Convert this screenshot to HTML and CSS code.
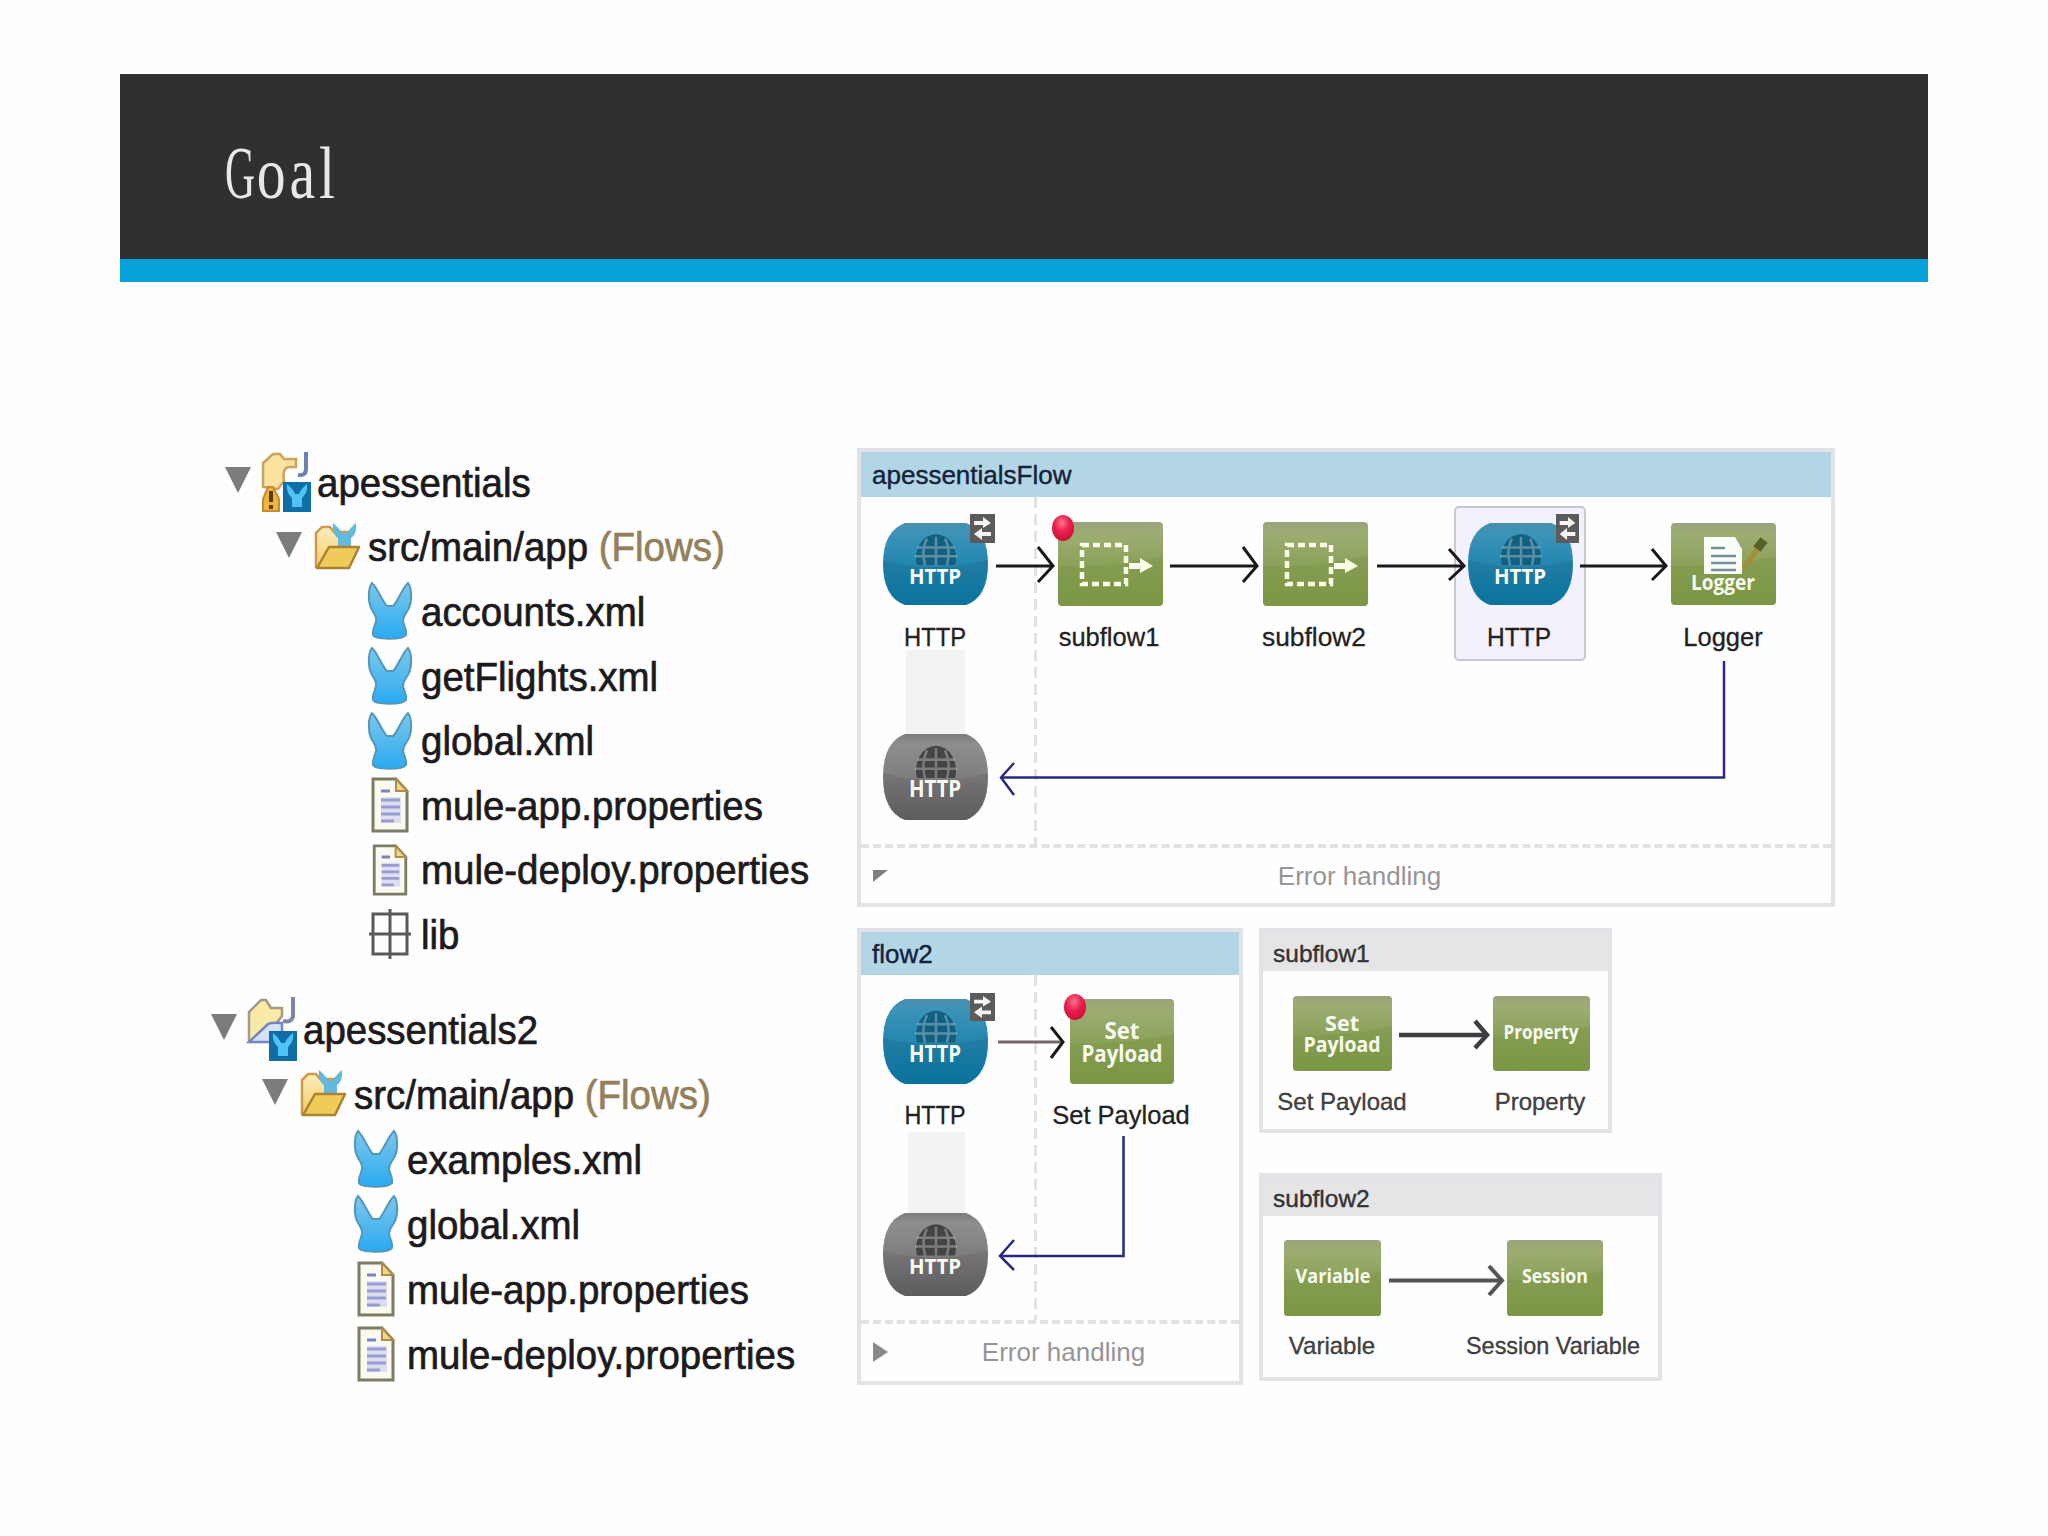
FILE: index.html
```
<!DOCTYPE html>
<html lang="en">
<head>
    <meta charset="UTF-8">
    <meta name="viewport" content="width=device-width, initial-scale=1.0">
    <title>Goal</title>
    <link rel="stylesheet" href="styles.css">
</head>
<body>
    <!-- shared shapes -->
    <svg class="defs" width="0" height="0">
        <defs>
            <linearGradient id="blue" x1="0" y1="0" x2="0" y2="1">
                <stop offset="0" stop-color="#4a8fae"/>
                <stop offset=".12" stop-color="#3c93b8"/>
                <stop offset=".5" stop-color="#2487b0"/>
                <stop offset="1" stop-color="#0a7dab"/>
            </linearGradient>
            <linearGradient id="grey" x1="0" y1="0" x2="0" y2="1">
                <stop offset="0" stop-color="#7c7a7c"/>
                <stop offset=".12" stop-color="#8f8d8f"/>
                <stop offset=".5" stop-color="#7f7d7f"/>
                <stop offset="1" stop-color="#666466"/>
            </linearGradient>
            <linearGradient id="green" x1="0" y1="0" x2="0" y2="1">
                <stop offset="0" stop-color="#9aa37c"/>
                <stop offset=".14" stop-color="#9dad72"/>
                <stop offset=".5" stop-color="#8ba25a"/>
                <stop offset="1" stop-color="#7f9a49"/>
            </linearGradient>
            <linearGradient id="sky" x1="0" y1="0" x2="0" y2="1">
                <stop offset="0" stop-color="#7cc8ea"/>
                <stop offset="1" stop-color="#2aaaf2"/>
            </linearGradient>
            <linearGradient id="gold" x1="0" y1="0" x2="0" y2="1">
                <stop offset="0" stop-color="#fbeec0"/>
                <stop offset="1" stop-color="#f3cd62"/>
            </linearGradient>
            <radialGradient id="red" cx=".45" cy=".3" r=".7">
                <stop offset="0" stop-color="#f87490"/>
                <stop offset=".5" stop-color="#ea1f4b"/>
                <stop offset="1" stop-color="#c8103a"/>
            </radialGradient>

            <symbol id="rabbit" viewBox="0 0 46 60">
                <path d="M5 2C1 7 1 20 4 27C6 32 10 34 9 40C8 45 5 49 6 54C8 59 36 59 39 54C40 49 37 45 36 40C36 34 40 32 42 27C45 20 45 7 41 2C36 6 30 22 26 25H20C16 22 10 6 5 2Z" fill="url(#sky)" stroke="#5597b8" stroke-width="2"/>
            </symbol>
            <symbol id="doc" viewBox="0 0 38 56">
                <path d="M2 2H25L36 14V54H2Z" fill="#fbfaf0" stroke="#7d7b62" stroke-width="3"/>
                <path d="M25 2V14H36Z" fill="#f3d48c" stroke="#b08c48" stroke-width="2"/>
                <path d="M10 14H19M10 23H29M10 30H29M10 37H29M10 44H23" stroke="#7d83bd" stroke-width="3"/>
                <path d="M10 20H30V46H10Z" fill="#b9bdf0" opacity=".45"/>
            </symbol>
            <symbol id="folder" viewBox="0 0 48 48">
                <path d="M3 44V10L9 4H17L21 9H35V44Z" fill="url(#gold)" stroke="#d09a48" stroke-width="2.5"/>
                <path d="M20 0C19 9 22 13 25 15V23H38V15C41 13 44 9 43 0C39 3 36 7 34 10H29C27 7 24 3 20 0Z" fill="#62b9dc"/>
                <path d="M4 45L16 24H46L36 45Z" fill="#f0cb5c" stroke="#ab8230" stroke-width="2.5" stroke-linejoin="round"/>
            </symbol>
            <symbol id="caret" viewBox="0 0 28 28">
                <path d="M0 0H28L14 28Z" fill="#7d7b7d"/>
            </symbol>
            <symbol id="mule-tag" viewBox="0 0 28 30">
                <rect width="28" height="30" fill="#0f6ea6"/>
                <path d="M4 2C3 10 7 14 9 16V25H19V16C21 14 25 10 24 2C20 5 17 9 16 12H12C11 9 8 5 4 2Z" fill="#4fc3f3"/>
            </symbol>
            <symbol id="project-warn" viewBox="0 0 52 62">
                <path d="M3 36V12L13 3H20L24 8H36V16H29C23 17 23 24 24 30L18 38Z" fill="#fae3a0" stroke="#c9a45e" stroke-width="2.5"/>
                <path d="M46 1V18Q46 25 38 24" fill="none" stroke="#6f7fb4" stroke-width="4"/>
                <path d="M3 60V48L8 36H13L19 48V60Z" fill="#eeb440" stroke="#c98d28" stroke-width="2"/>
                <path d="M11 40V51M11 54V58" stroke="#5b3d10" stroke-width="4"/>
                <use href="#mule-tag" x="23" y="31" width="28" height="30"/>
            </symbol>
            <symbol id="project" viewBox="0 0 52 66">
                <path d="M3 45V16L15 4H20L25 12H36V20L16 45Z" fill="#f9eaa8" stroke="#a59a88" stroke-width="2.5"/>
                <path d="M3 46L22 28Q26 26 36 27V46Z" fill="#d5e3fa" stroke="#7484be" stroke-width="2.5"/>
                <path d="M47 1V20Q46 27 37 25" fill="none" stroke="#7f86a2" stroke-width="4"/>
                <use href="#mule-tag" x="23" y="35" width="28" height="30"/>
            </symbol>
            <symbol id="lib" viewBox="0 0 42 50">
                <path d="M4 5H38V45H4ZM21 0V50M0 25H42" fill="none" stroke="#5a585a" stroke-width="3"/>
            </symbol>

            <symbol id="http" viewBox="0 0 105 84" preserveAspectRatio="none">
                <path class="http-shell" d="M22 0H83Q105 8 105 42Q105 76 83 84H22Q0 76 0 42Q0 8 22 0Z"/>
                <path d="M0 38Q52 52 105 38Q104 76 83 84H22Q1 76 0 38Z" fill="#000" opacity=".08"/>
                <path d="M34 43A20 24 0 1 1 72 43Z" fill="currentColor"/>
                <path class="http-grid" d="M34 25H72M32 34H74M53 14V43M44 16Q38 28 42 43M62 16Q68 28 64 43"/>
                <text class="tile-text" x="52" y="62" font-size="22" textLength="52" lengthAdjust="spacingAndGlyphs">HTTP</text>
            </symbol>
            <symbol id="swap" viewBox="0 0 25 29" preserveAspectRatio="none">
                <rect width="25" height="29" fill="#5d5a5a"/>
                <path d="M4 7H13V3L21 9L13 14V11H4ZM21 18H12V14L4 20L12 26V22H21Z" fill="#f4f4f4"/>
            </symbol>
            <symbol id="tile" viewBox="0 0 105 84" preserveAspectRatio="none">
                <rect width="105" height="84" rx="4" fill="url(#green)"/>
                <path d="M0 44Q55 46 105 34V80Q105 84 101 84H4Q0 84 0 80Z" fill="#6e8c36" opacity=".25"/>
            </symbol>
            <symbol id="flow-ref" viewBox="0 0 105 84">
                <use href="#tile" width="105" height="84"/>
                <rect x="24" y="23" width="44" height="39" fill="none" stroke="#fbfce8" stroke-width="4.5" stroke-dasharray="7 4"/>
                <path d="M71 41H82V36L95 44L82 51V47H71Z" fill="#fbfce8"/>
            </symbol>
            <symbol id="dot" viewBox="0 0 24 26">
                <ellipse cx="12" cy="13" rx="11" ry="13" fill="url(#red)"/>
            </symbol>
        </defs>
    </svg>

    <header class="title-bar">
        <h1><span class="cap">G</span>oal</h1>
    </header>

    <main class="content">
        <nav class="trees">
            <ul class="tree">
                <li><svg class="caret"><use href="#caret"/></svg><span class="icon"><svg width="52" height="62"><use href="#project-warn"/></svg></span><span class="label">apessentials</span></li>
                <li class="level-2"><svg class="caret"><use href="#caret"/></svg><span class="icon"><svg width="48" height="48"><use href="#folder"/></svg></span><span class="label">src/main/app <em>(Flows)</em></span></li>
                <li class="level-3"><span class="icon"><svg width="46" height="60"><use href="#rabbit"/></svg></span><span class="label">accounts.xml</span></li>
                <li class="level-3"><span class="icon"><svg width="46" height="60"><use href="#rabbit"/></svg></span><span class="label">getFlights.xml</span></li>
                <li class="level-3"><span class="icon"><svg width="46" height="60"><use href="#rabbit"/></svg></span><span class="label">global.xml</span></li>
                <li class="level-3"><span class="icon"><svg width="38" height="56"><use href="#doc"/></svg></span><span class="label">mule-app.properties</span></li>
                <li class="level-3"><span class="icon"><svg width="38" height="52"><use href="#doc"/></svg></span><span class="label">mule-deploy.properties</span></li>
                <li class="level-3"><span class="icon"><svg width="42" height="50"><use href="#lib"/></svg></span><span class="label">lib</span></li>
            </ul>
            <ul class="tree tree-second">
                <li><svg class="caret"><use href="#caret"/></svg><span class="icon"><svg width="52" height="66"><use href="#project"/></svg></span><span class="label">apessentials2</span></li>
                <li class="level-2"><svg class="caret"><use href="#caret"/></svg><span class="icon"><svg width="48" height="48"><use href="#folder"/></svg></span><span class="label">src/main/app <em>(Flows)</em></span></li>
                <li class="level-3"><span class="icon"><svg width="46" height="60"><use href="#rabbit"/></svg></span><span class="label">examples.xml</span></li>
                <li class="level-3"><span class="icon"><svg width="46" height="60"><use href="#rabbit"/></svg></span><span class="label">global.xml</span></li>
                <li class="level-3"><span class="icon"><svg width="38" height="56"><use href="#doc"/></svg></span><span class="label">mule-app.properties</span></li>
                <li class="level-3"><span class="icon"><svg width="38" height="56"><use href="#doc"/></svg></span><span class="label">mule-deploy.properties</span></li>
            </ul>
        </nav>

        <div class="flows">
            <section class="panel main-flow">
                <h2>apessentialsFlow</h2>
                <svg class="canvas" width="970" height="347" viewBox="861 497 970 347">
                    <rect class="band" x="906" y="650" width="59" height="90"/>
                    <path class="divider" d="M1035.500 497V844"/>
                    <rect class="selected" x="1455" y="507" width="130" height="153" rx="4"/>
                    <use class="http-in" href="#http" x="883" y="523" width="105" height="82"/>
                    <use href="#swap" x="970" y="514" width="25" height="29"/>
                    <use href="#flow-ref" x="1058" y="522" width="105" height="84"/>
                    <use href="#dot" x="1051" y="515" width="24" height="26"/>
                    <use href="#flow-ref" x="1263" y="522" width="105" height="84"/>
                    <use class="http-in" href="#http" x="1468" y="523" width="105" height="82"/>
                    <use href="#swap" x="1556" y="514" width="23" height="29"/>
                    <use href="#tile" x="1671" y="523" width="105" height="82"/>
                    <path d="M1704 537H1735L1742 549V574H1704Z" fill="#fafcf8"/>
                    <path d="M1711 548H1725M1711 556H1736M1711 563H1736M1711 570H1736" stroke="#7790a0" stroke-width="2.500"/>
                    <path d="M1744 568L1763 541" stroke="#a48f35" stroke-width="5"/>
                    <path d="M1757 549L1764 540" stroke="#55602c" stroke-width="9"/>
                    <text class="tile-text" x="1723" y="590" font-size="22" textLength="64" lengthAdjust="spacingAndGlyphs">Logger</text>
                    <path class="arrow" d="M996 566H1052M1038 547L1053 566L1038 582"/>
                    <path class="arrow" d="M1170 566H1256M1243 547L1257 566L1243 582"/>
                    <path class="arrow" d="M1377 566H1463M1449 549L1464 566L1449 580"/>
                    <path class="arrow" d="M1580 566H1665M1652 549L1666 566L1652 580"/>
                    <use class="http-out" href="#http" x="883" y="734" width="105" height="86"/>
                    <path class="return" d="M1724 661V777.500H1002M1014 763L1001 777.500L1014 795"/>
                    <text class="node-label" x="935" y="646" textLength="62" lengthAdjust="spacingAndGlyphs">HTTP</text>
                    <text class="node-label" x="1109" y="646">subflow1</text>
                    <text class="node-label" x="1314" y="646" textLength="104" lengthAdjust="spacingAndGlyphs">subflow2</text>
                    <text class="node-label" x="1519" y="646" textLength="64" lengthAdjust="spacingAndGlyphs">HTTP</text>
                    <text class="node-label" x="1723" y="646">Logger</text>
                </svg>
                <div class="error-row">
                    <svg width="15" height="12"><path d="M0 0H15L0 12Z" fill="#807e80"/></svg>
                    <span>Error handling</span>
                </div>
            </section>

            <div class="lower">
                <section class="panel second-flow">
                    <h2>flow2</h2>
                    <svg class="canvas" width="378" height="345" viewBox="861 975 378 345">
                        <rect class="band" x="908" y="1132" width="57" height="90"/>
                        <path class="divider" d="M1035.500 975V1320"/>
                        <use class="http-in" href="#http" x="883" y="999" width="105" height="85"/>
                        <use href="#swap" x="970" y="993" width="25" height="28"/>
                        <use href="#tile" x="1070" y="999" width="104" height="85"/>
                        <use href="#dot" x="1063" y="994" width="24" height="26"/>
                        <text class="tile-text" x="1122" y="1039" font-size="23" textLength="35" lengthAdjust="spacingAndGlyphs">Set</text>
                        <text class="tile-text" x="1122" y="1062" font-size="23" textLength="81" lengthAdjust="spacingAndGlyphs">Payload</text>
                        <path class="arrow thin" d="M998 1042H1062"/>
                        <path class="arrow" d="M1051 1027L1063 1042L1051 1058"/>
                        <use class="http-out" href="#http" x="883" y="1213" width="105" height="83"/>
                        <path class="return" d="M1123.500 1136V1256H1002M1014 1240L1000 1256L1014 1270"/>
                        <text class="node-label" x="935" y="1124" textLength="61" lengthAdjust="spacingAndGlyphs">HTTP</text>
                        <text class="node-label" x="1121" y="1124">Set Payload</text>
                    </svg>
                    <div class="error-row">
                        <svg width="15" height="20"><path d="M0 0L15 10L0 20Z" fill="#8b898b"/></svg>
                        <span>Error handling</span>
                    </div>
                </section>

                <div class="subflows">
                    <section class="panel subflow subflow-1">
                        <h2>subflow1</h2>
                        <svg class="canvas" width="345" height="158" viewBox="1263 971 345 158">
                            <use href="#tile" x="1293" y="996" width="99" height="75"/>
                            <text class="tile-text" x="1342" y="1031" font-size="21" textLength="34" lengthAdjust="spacingAndGlyphs">Set</text>
                            <text class="tile-text" x="1342" y="1052" font-size="21" textLength="77" lengthAdjust="spacingAndGlyphs">Payload</text>
                            <use href="#tile" x="1493" y="996" width="97" height="75"/>
                            <text class="tile-text" x="1541" y="1039" font-size="20" textLength="75" lengthAdjust="spacingAndGlyphs">Property</text>
                            <path class="arrow heavy" d="M1399 1035H1486M1475 1021L1487 1035L1475 1048"/>
                            <text class="node-label small" x="1342" y="1110">Set Payload</text>
                            <text class="node-label small" x="1540" y="1110">Property</text>
                        </svg>
                    </section>
                    <section class="panel subflow subflow-2">
                        <h2>subflow2</h2>
                        <svg class="canvas" width="395" height="161" viewBox="1263 1216 395 161">
                            <use href="#tile" x="1284" y="1240" width="97" height="76"/>
                            <text class="tile-text" x="1333" y="1283" font-size="20" textLength="75" lengthAdjust="spacingAndGlyphs">Variable</text>
                            <use href="#tile" x="1507" y="1240" width="96" height="76"/>
                            <text class="tile-text" x="1555" y="1283" font-size="20" textLength="66" lengthAdjust="spacingAndGlyphs">Session</text>
                            <path class="arrow medium" d="M1389 1280.500H1500M1489 1266L1502 1280.500L1489 1295"/>
                            <text class="node-label small" x="1332" y="1354">Variable</text>
                            <text class="node-label small" x="1553" y="1354" textLength="174" lengthAdjust="spacingAndGlyphs">Session Variable</text>
                        </svg>
                    </section>
                </div>
            </div>
        </div>
    </main>
</body>
</html>
```
FILE: styles.css
```
* {
    box-sizing: border-box;
}
body {
    margin: 0;
    padding: 74px 120px 0;
    height: 1536px;
    overflow: hidden;
    background-color: #fefefe;
    font-family: "Liberation Sans", Arial, sans-serif;
    color: #1c1a1c;
}
svg {
    display: block;
}
.defs {
    position: absolute;
}
.title-bar {
    height: 208px;
    padding: 57px 0 0 105px;
    background-color: #303030;
    border-bottom: 23px solid #06a1da;
}
.title-bar h1 {
    margin: 0;
    font-family: "Liberation Serif", serif;
    font-size: 75px;
    font-weight: normal;
    line-height: 84px;
    letter-spacing: 5px;
    color: #e8e8e8;
    transform: scaleX(0.77);
    transform-origin: left;
}
.title-bar .cap {
    display: inline-block;
    margin-right: -18px;
    transform: scaleX(0.72);
    transform-origin: left;
}
.content {
    display: flex;
    margin-top: 166px;
}

/* project trees */
.trees {
    width: 737px;
    padding: 2px 0 0 104px;
}
.tree {
    list-style: none;
    margin: 0;
    padding: 0;
}
.tree li {
    display: flex;
    align-items: center;
    height: 64.6px;
}
.tree-second {
    margin: 30px 0 0 -14px;
}
.tree-second li {
    height: 65px;
}
.tree .level-2 {
    padding-left: 51px;
}
.tree .level-3 {
    padding-left: 140px;
}
.caret {
    width: 28px;
    height: 26px;
    margin: 0 8px 4px 0;
}
.icon {
    display: flex;
    justify-content: center;
    width: 52px;
    margin-right: 5px;
}
.label {
    padding-top: 2px;
    font-size: 40px;
    white-space: nowrap;
    transform: scaleX(0.961);
    transform-origin: left;
    -webkit-text-stroke: 0.7px;
}
.label em {
    font-style: normal;
    color: #94805a;
}

/* flow panels */
.flows {
    display: flex;
    flex-direction: column;
    gap: 20px;
}
.lower {
    display: flex;
    align-items: flex-start;
    gap: 16px;
}
.subflows {
    display: flex;
    flex-direction: column;
    gap: 40px;
}
.panel {
    border: 4px solid #e3e2e6;
    background-color: #fefefe;
}
.panel h2 {
    margin: 0;
    padding-left: 11px;
    height: 45px;
    line-height: 47px;
    font-size: 26px;
    font-weight: normal;
    color: #14223a;
    background-color: #b3d6e6;
    -webkit-text-stroke: 0.4px;
}
.main-flow {
    width: 978px;
    height: 459px;
}
.second-flow {
    width: 386px;
    height: 457px;
    margin-top: 1px;
}
.second-flow h2 {
    height: 43px;
    line-height: 44px;
}
.subflow h2 {
    height: 39px;
    padding-left: 10px;
    line-height: 43px;
    font-size: 24.500px;
    color: #333;
    background-color: #e5e4e6;
}
.subflow-1 {
    width: 353px;
    height: 205px;
    margin-top: 1px;
}
.subflow-2 {
    width: 403px;
    height: 208px;
}
.error-row {
    display: flex;
    align-items: center;
    height: 60px;
    padding: 0 0 0 12px;
    border-top: 4px dashed #e3e1e5;
    font-size: 26px;
    color: #969496;
}
.error-row span {
    flex: 1;
    text-align: center;
}

/* diagram parts */
.http-shell {
    fill: inherit;
}
.http-in {
    fill: url(#blue);
    color: #125f80;
}
.http-out {
    fill: url(#grey);
    color: #444;
}
.http-grid {
    fill: none;
    stroke: #fff;
    stroke-opacity: 0.3;
    stroke-width: 2.5;
}
.tile-text {
    font-family: "Open Sans", sans-serif;
    font-weight: bold;
    text-anchor: middle;
    fill: #f8fbf0;
}
.node-label {
    font-size: 25.500px;
    text-anchor: middle;
    fill: #222;
    stroke: #222;
    stroke-width: 0.3;
}
.node-label.small {
    font-size: 24px;
    fill: #444;
}
.band {
    fill: #f3f3f4;
}
.divider {
    fill: none;
    stroke: #e3e1e5;
    stroke-width: 3;
    stroke-dasharray: 11 6;
}
.selected {
    fill: #f3f1fb;
    stroke: #cdc6d0;
    stroke-width: 2;
}
.arrow {
    fill: none;
    stroke: #1b181b;
    stroke-width: 3;
}
.arrow.thin {
    stroke: #75666c;
}
.arrow.medium {
    stroke: #555357;
    stroke-width: 4;
}
.arrow.heavy {
    stroke: #3f3c42;
    stroke-width: 4.5;
}
.return {
    fill: none;
    stroke: #2a2880;
    stroke-width: 2.5;
}
```
